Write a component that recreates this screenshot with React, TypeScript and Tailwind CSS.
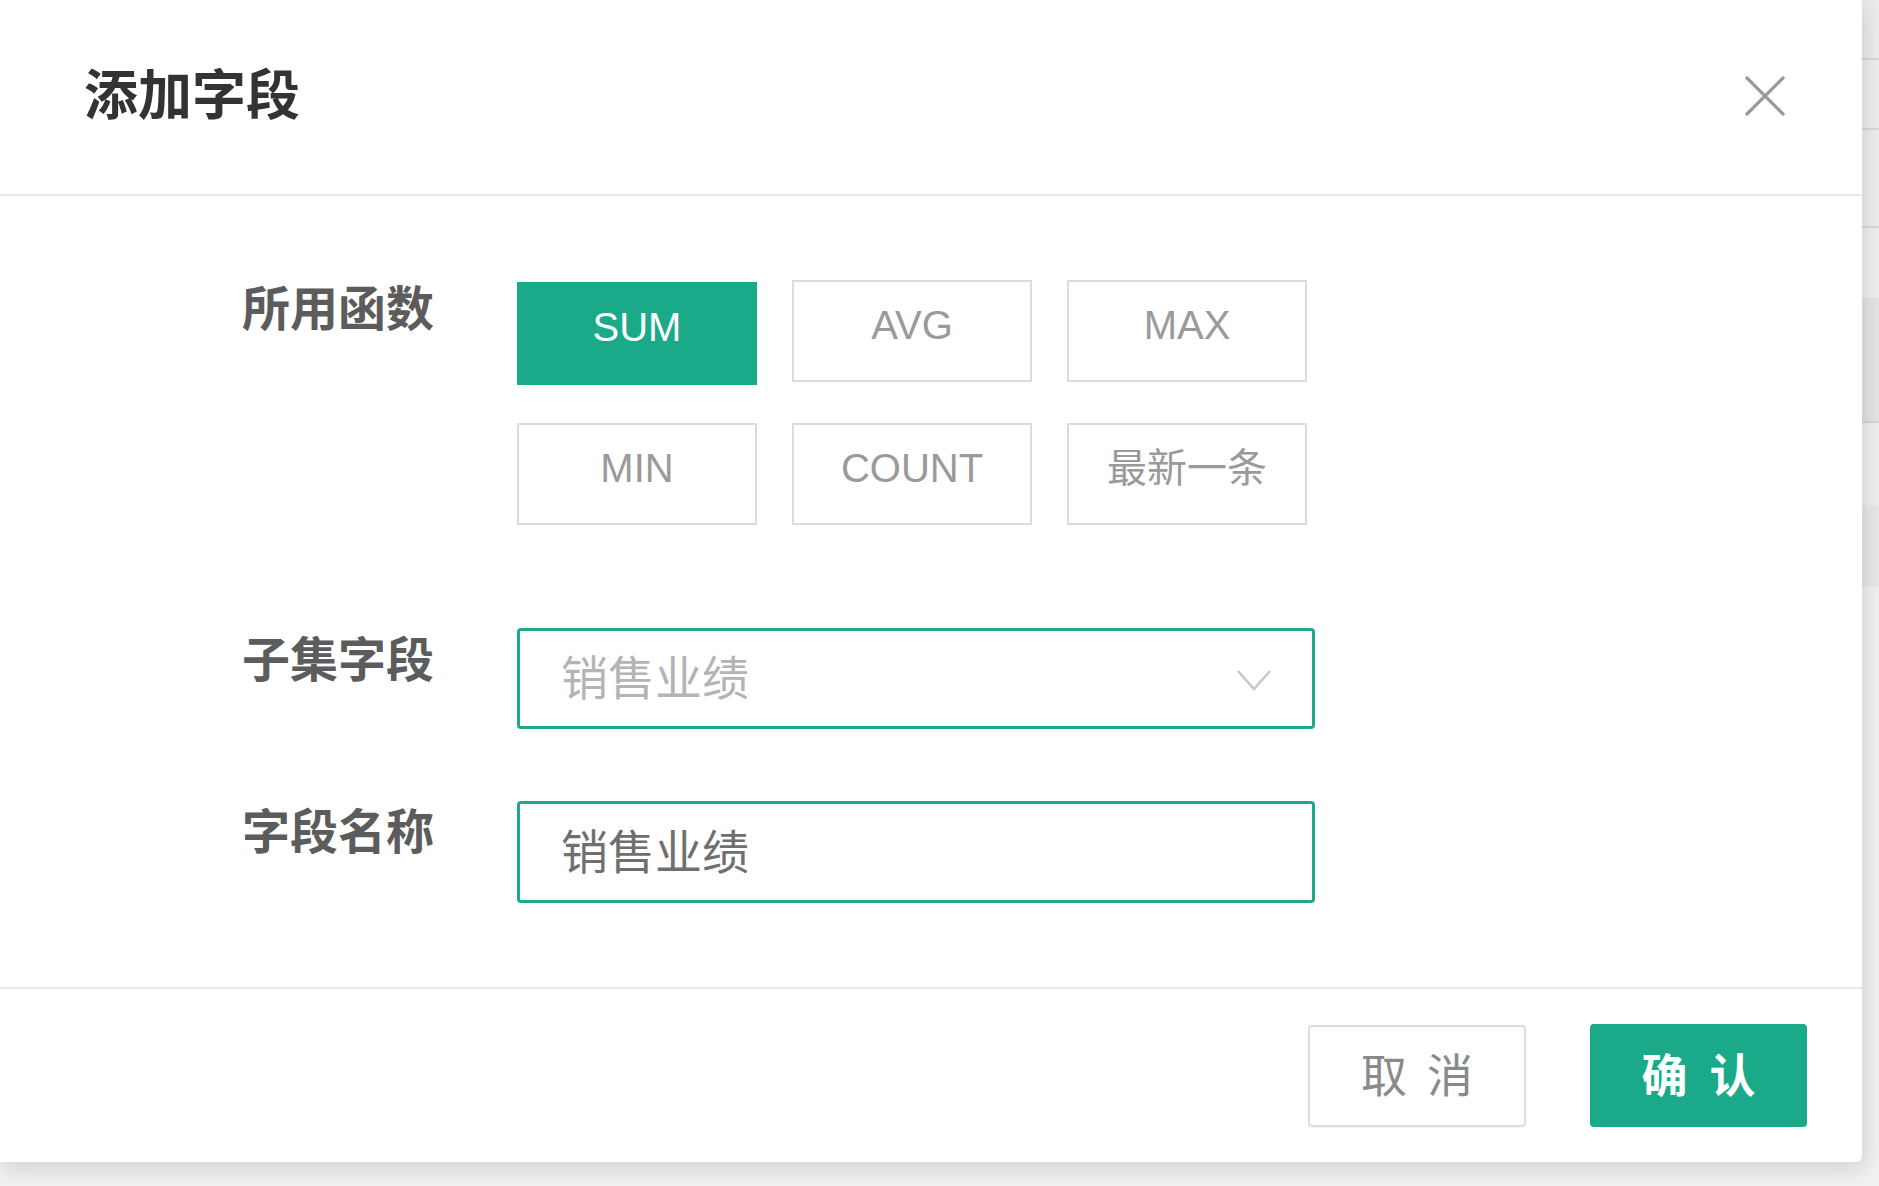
import React from "react";

const FONT = '"Liberation Sans", "Noto Sans CJK SC", sans-serif';

function FnButton({ label, active }: { label: string; active?: boolean }) {
  if (active) {
    return (
      <div className="flex h-[103px] w-[240px] translate-y-[2px] items-center justify-center bg-[#1aaa8a] pb-[14px] text-[40px] text-white">
        {label}
      </div>
    );
  }
  return (
    <div className="flex h-[102px] w-[240px] items-center justify-center border-2 border-[#dcdcdc] bg-white pb-[12px] text-[40px] text-[#9a9a9a]">
      {label}
    </div>
  );
}

export default function App() {
  return (
    <div
      className="flex h-[1186px] w-[1879px] overflow-hidden bg-[#f1f1f1]"
      style={{ fontFamily: FONT }}
    >
      {/* Dialog */}
      <div className="relative z-10 flex h-[1162px] w-[1862px] shrink-0 flex-col rounded-br-[6px] bg-white shadow-[2px_6px_22px_rgba(0,0,0,0.14)]">
        {/* Header */}
        <div className="flex h-[196px] shrink-0 items-center justify-between border-b-2 border-[#e8e8e8] pl-[84px] pr-[76px]">
          <div className="pb-[2px] text-[54px] font-bold leading-none text-[#333333]">添加字段</div>
          <svg width="42" height="42" viewBox="0 0 42 42" className="mb-[2px]">
            <path d="M2 2 L40 40 M40 2 L2 40" stroke="#9a9a9a" strokeWidth="3.2" fill="none" />
          </svg>
        </div>

        {/* Body */}
        <div className="flex flex-1 flex-col pl-[242px] pt-[84px]">
          {/* Functions row */}
          <div className="flex">
            <div className="w-[192px] shrink-0 pt-[6px] text-right text-[48px] font-semibold leading-[48px] text-[#5c5c5c]">
              所用函数
            </div>
            <div className="ml-[83px] grid grid-cols-[240px_240px_240px] gap-x-[35px] gap-y-[40px]">
              <FnButton label="SUM" active />
              <FnButton label="AVG" />
              <FnButton label="MAX" />
              <FnButton label="MIN" />
              <FnButton label="COUNT" />
              <FnButton label="最新一条" />
            </div>
          </div>

          {/* Subset field row */}
          <div className="mt-[103px] flex">
            <div className="w-[192px] shrink-0 pt-[9px] text-right text-[48px] font-semibold leading-[48px] text-[#5c5c5c]">
              子集字段
            </div>
            <div className="ml-[83px] flex h-[101px] w-[798px] items-center justify-between rounded-[4px] border-[3px] border-[#1fa98c] pl-[41px] pr-[40px]">
              <span className="text-[47px] leading-none text-[#b4b4b4]">销售业绩</span>
              <svg width="36" height="24" viewBox="0 0 36 24" className="mt-[2px]">
                <path d="M2 3 L18 21 L34 3" stroke="#c8c8c8" strokeWidth="2.6" fill="none" />
              </svg>
            </div>
          </div>

          {/* Field name row */}
          <div className="mt-[72px] flex">
            <div className="w-[192px] shrink-0 pt-[8px] text-right text-[48px] font-semibold leading-[48px] text-[#5c5c5c]">
              字段名称
            </div>
            <div className="ml-[83px] flex h-[102px] w-[798px] items-center rounded-[4px] border-[3px] border-[#1fa98c] pl-[41px]">
              <span className="text-[47px] leading-none text-[#6f6f6f]">销售业绩</span>
            </div>
          </div>
        </div>

        {/* Footer */}
        <div className="flex h-[175px] shrink-0 items-center justify-end gap-[64px] border-t-2 border-[#ebebeb] pr-[55px]">
          <div className="flex h-[102px] w-[218px] items-center justify-center gap-[20px] rounded-[4px] border-2 border-[#dddddd] bg-white text-[46px] leading-none text-[#8a8a8a] shadow-[0_1px_2px_rgba(0,0,0,0.04)]">
            <span>取</span>
            <span>消</span>
          </div>
          <div className="flex h-[103px] w-[217px] items-center justify-center gap-[22px] rounded-[4px] bg-[#1aaa8a] text-[46px] font-bold leading-none text-white">
            <span>确</span>
            <span>认</span>
          </div>
        </div>
      </div>

      {/* Background page strip behind the mask */}
      <div className="flex flex-1 flex-col">
        <div className="h-[60px] shrink-0 border-b-2 border-[#d6d6d6] bg-[#ececec]" />
        <div className="h-[70px] shrink-0 border-b-2 border-[#d8d8d8] bg-[#eeeeee]" />
        <div className="h-[98px] shrink-0 border-b-2 border-[#d8d8d8] bg-[#eeeeee]" />
        <div className="h-[70px] shrink-0 bg-[#efefef]" />
        <div className="h-[125px] shrink-0 border-b-2 border-[#d6d6d6] bg-[#e4e4e4]" />
        <div className="h-[82px] shrink-0 bg-[#efefef]" />
        <div className="h-[82px] shrink-0 bg-[#e8e8e8]" />
        <div className="flex-1 bg-[#f1f1f1]" />
      </div>
    </div>
  );
}
